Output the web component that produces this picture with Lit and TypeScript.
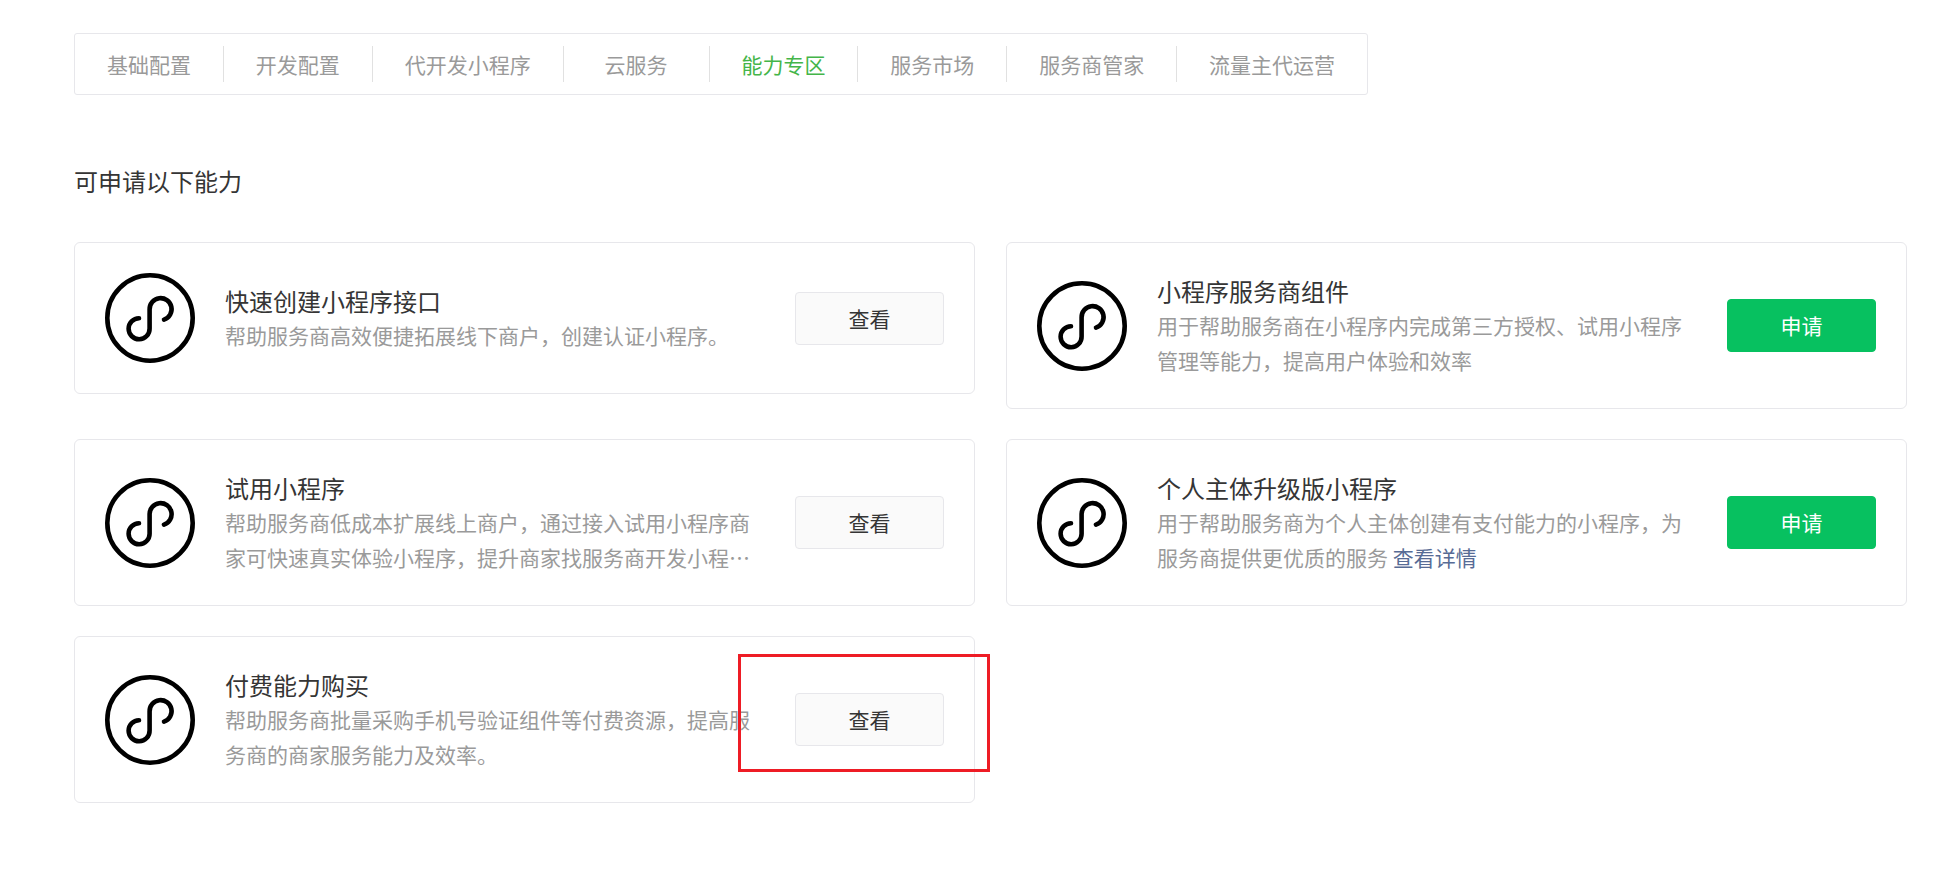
import { LitElement, html, css, svg } from "lit";
import { customElement } from "lit/decorators.js";

const tabs = ["基础配置", "开发配置", "代开发小程序", "云服务", "能力专区", "服务市场", "服务商管家", "流量主代运营"];

interface Ability {
  title: string;
  desc: string;
  link?: string;
  action: "查看" | "申请";
}

const abilities: Ability[] = [
  { title: "快速创建小程序接口", desc: "帮助服务商高效便捷拓展线下商户，创建认证小程序。", action: "查看" },
  { title: "小程序服务商组件", desc: "用于帮助服务商在小程序内完成第三方授权、试用小程序管理等能力，提高用户体验和效率", action: "申请" },
  { title: "试用小程序", desc: "帮助服务商低成本扩展线上商户，通过接入试用小程序商家可快速真实体验小程序，提升商家找服务商开发小程序的意愿，促进小程序成交转化。", action: "查看" },
  { title: "个人主体升级版小程序", desc: "用于帮助服务商为个人主体创建有支付能力的小程序，为服务商提供更优质的服务 ", link: "查看详情", action: "申请" },
  { title: "付费能力购买", desc: "帮助服务商批量采购手机号验证组件等付费资源，提高服务商的商家服务能力及效率。", action: "查看" },
];

const miniIcon = svg`<circle cx="45" cy="45" r="42.7" fill="none" stroke="#000" stroke-width="4.6" />
  <path d="M34 45.2A10.5 10.5 0 1 0 44.6 55.5V36.5A11 11 0 1 1 59 46.6" fill="none" stroke="#000" stroke-width="4.6" stroke-linecap="round" />`;

@customElement("app-root")
export class AppRoot extends LitElement {
  static styles = css`
    :host {
      display: block;
      position: relative;
      box-sizing: border-box;
      padding: 33px 33px 60px 74px;
      font-family: "Noto Sans CJK SC", "Liberation Sans", sans-serif;
      color: #353535;
      background: #fff;
    }

    .tabs {
      display: flex;
      align-items: center;
      box-sizing: border-box;
      width: 1294px;
      height: 62px;
      border: 1px solid #e7e7eb;
      border-radius: 3px;
    }

    .tab {
      box-sizing: border-box;
      flex: auto;
      min-width: 146px;
      height: 36px;
      padding: 0 31px;
      font-size: 21px;
      line-height: 36px;
      text-align: center;
      color: #9a9a9a;
      border-left: 1px solid #e1e1e1;
    }

    .tab:first-child {
      border-left: none;
    }

    .tab.active {
      color: #44b549;
    }

    h2 {
      margin: 68px 0 43px;
      font-size: 24px;
      line-height: 36px;
      font-weight: 400;
    }

    .grid {
      display: grid;
      grid-template-columns: 901px 901px;
      column-gap: 31px;
      row-gap: 30px;
      align-items: start;
    }

    .card {
      display: flex;
      align-items: center;
      padding: 30px;
      border: 1px solid #e7e7eb;
      border-radius: 6px;
    }

    .icon {
      flex: none;
      width: 90px;
      height: 90px;
      margin-right: 30px;
    }

    .body {
      flex: none;
      width: 530px;
      margin-right: 40px;
    }

    .title {
      font-size: 24px;
      line-height: 35px;
    }

    .desc {
      display: -webkit-box;
      -webkit-box-orient: vertical;
      -webkit-line-clamp: 2;
      overflow: hidden;
      font-size: 21px;
      line-height: 35px;
      color: #9a9a9a;
    }

    .desc a {
      color: #576b95;
      text-decoration: none;
    }

    .btn {
      flex: none;
      box-sizing: border-box;
      width: 149px;
      height: 53px;
      font-size: 21px;
      line-height: 51px;
      text-align: center;
      border: 1px solid #e7e7eb;
      border-radius: 4px;
      background: #fafafa;
      color: #353535;
    }

    .btn.primary {
      background: #07c160;
      border-color: #07c160;
      color: #fff;
    }

    .mark {
      position: absolute;
      left: 738px;
      top: 654px;
      box-sizing: border-box;
      width: 252px;
      height: 118px;
      border: 3.5px solid #ee1c25;
      pointer-events: none;
    }
  `;

  renderCard(item: Ability) {
    return html`<div class="card">
      <svg class="icon" viewBox="0 0 90 90">${miniIcon}</svg>
      <div class="body">
        <div class="title">${item.title}</div>
        <div class="desc">${item.desc}${item.link ? html`<a href="#">${item.link}</a>` : ""}</div>
      </div>
      <div class="btn ${item.action === "申请" ? "primary" : ""}">${item.action}</div>
    </div>`;
  }

  render() {
    return html`
      <div class="tabs">
        ${tabs.map((t) => html`<div class="tab ${t === "能力专区" ? "active" : ""}">${t}</div>`)}
      </div>
      <h2>可申请以下能力</h2>
      <div class="grid">${abilities.map((a) => this.renderCard(a))}</div>
      <div class="mark"></div>
    `;
  }
}
